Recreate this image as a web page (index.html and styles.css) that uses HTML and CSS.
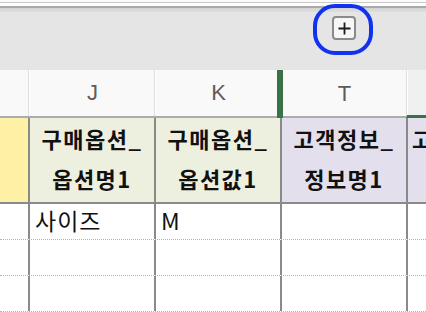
FILE: index.html
```
<!DOCTYPE html>
<html lang="ko">

<head>
    <meta charset="UTF-8">
    <meta name="viewport" content="width=device-width, initial-scale=1.0">
    <title>시트</title>
    <link rel="stylesheet" href="styles.css">
</head>

<body>
    <!-- 상단 테두리 -->
    <div class="topline"></div>

    <!-- 도구 막대 -->
    <div class="toolbar">
        <button class="add">
            <svg width="13" height="13" viewBox="0 0 13 13">
                <path d="M6.5 0.5V12.5M0.5 6.5H12.5" stroke="#1a1a1a" stroke-width="1.8" />
            </svg>
        </button>
        <span class="mark"></span>
    </div>

    <!-- 열 머리글 -->
    <div class="row colhead">
        <div class="cell"></div>
        <div class="cell">J</div>
        <div class="cell">K</div>
        <div class="cell picked">T</div>
        <div class="cell more"></div>
    </div>

    <!-- 항목 이름 -->
    <div class="row titles">
        <div class="cell yellow"></div>
        <div class="cell green">구매옵션_<br>옵션명1</div>
        <div class="cell green">구매옵션_<br>옵션값1</div>
        <div class="cell purple">고객정보_<br>정보명1</div>
        <div class="cell purple cut"><span>고</span></div>
    </div>

    <div class="row data">
        <div class="cell"></div>
        <div class="cell">사이즈</div>
        <div class="cell">M</div>
        <div class="cell"></div>
        <div class="cell"></div>
    </div>
    <div class="row data">
        <div class="cell"></div>
        <div class="cell"></div>
        <div class="cell"></div>
        <div class="cell"></div>
        <div class="cell"></div>
    </div>
    <div class="row data">
        <div class="cell"></div>
        <div class="cell"></div>
        <div class="cell"></div>
        <div class="cell"></div>
        <div class="cell"></div>
    </div>
</body>

</html>
```

FILE: styles.css
```
* {
    margin: 0;
    padding: 0;
    box-sizing: border-box;
    font-family: 'Noto Sans CJK KR', 'Noto Sans', sans-serif;
}

body {
    width: 426px;
    height: 312px;
    overflow: hidden;
    background: #fff;
}

.topline {
    height: 12px;
    background: linear-gradient(#fbfbfb 0, #fbfbfb 2px, #c8c8c8 2px, #c8c8c8 3px,
            #fdfdfd 3px, #fdfdfd 6px, #a9a9a9 6px, #a9a9a9 8px,
            #d4d4d4 8px, #dedede 12px);
}

.toolbar {
    height: 58px;
    background: #e5e5e5;
    padding: 4px 0 0 332px;
    position: relative;
}

.add {
    width: 24px;
    height: 24px;
    border: 2px solid #8a8a8a;
    border-radius: 4px;
    background: #f6f6f6;
    display: flex;
    justify-content: center;
    align-items: center;
}

/* 파란 표시 */
.mark {
    position: absolute;
    left: 313px;
    top: -8px;
    width: 60px;
    height: 51px;
    border: 4px solid #1232ee;
    border-radius: 22px;
}

.row {
    display: grid;
    grid-template-columns: 28px 126px 126px 126px 1fr;
}

.cell {
    border-left: 2px solid #8a8a8a;
}

.cell:first-child {
    border-left: 0;
}

.colhead {
    height: 48px;
    background: #f9f9f9;
    border-bottom: 2px solid #acacac;
}

.colhead .cell {
    border-left: 1px solid #dedede;
    box-shadow: inset 1px 0 #fff;
    color: #5c5c5c;
    font-family: 'Liberation Sans', sans-serif;
    font-size: 22px;
    display: flex;
    justify-content: center;
    align-items: center;
    padding-left: 2px;
}

.colhead .cell:first-child {
    border-left: 0;
    box-shadow: none;
}

.colhead .picked {
    border-left: 6px solid #3a7247;
    box-shadow: none;
    margin-left: -3px;
    padding-left: 0;
    margin-bottom: -2px;
}

.colhead .more {
    background: #f0f0f0;
    border-bottom: 3px solid #3a7247;
    margin-bottom: -2px;
}

.titles {
    height: 86px;
    border-bottom: 2px solid #8a8a8a;
}

.titles .cell {
    font-size: 22px;
    letter-spacing: 1.5px;
    font-weight: bold;
    line-height: 40px;
    color: #111;
    text-align: center;
    white-space: nowrap;
}

.titles .cut {
    text-align: left;
    padding-left: 4px;
    overflow: hidden;
}

.yellow {
    background: #fef1a6;
}

.green {
    background: #eef0df;
}

.purple {
    background: #e3dfec;
}

.data {
    height: 36px;
    border-bottom: 1px dotted #b4b4b4;
}

.data .cell {
    font-size: 23px;
    letter-spacing: 1px;
    line-height: 32px;
    color: #111;
    padding-left: 5px;
}
```
